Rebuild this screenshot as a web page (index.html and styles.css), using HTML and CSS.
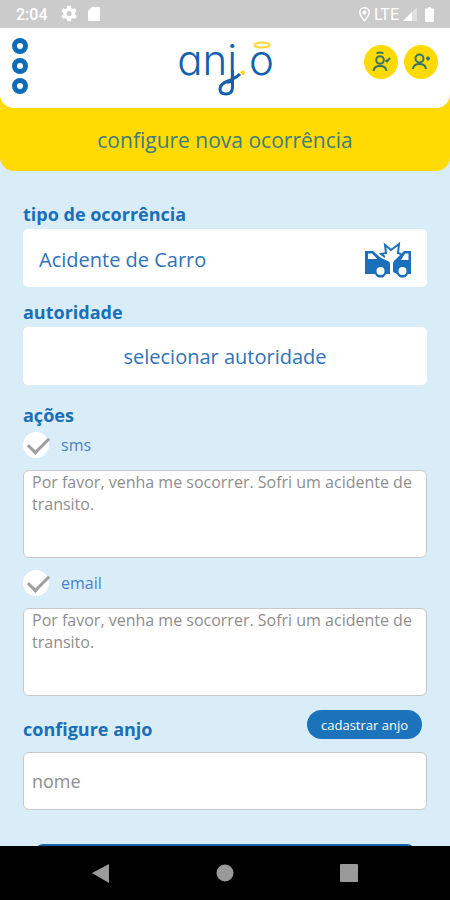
FILE: index.html
```html
<!DOCTYPE html>
<html lang="pt-BR">
  <head>
    <meta charset="UTF-8" />
    <meta name="viewport" content="width=device-width, initial-scale=1.0" />
    <title>anjo - nova ocorrência</title>
    <link rel="stylesheet" href="styles.css">
  </head>
  <body>
    <div class="app">
      <div class="status-bar">
        <span class="clock">2:04</span>
        <svg class="gear" width="18" height="18" viewBox="2 2 21 21"><path fill-rule="evenodd" d="M19.4 13a7.500 7.500 0 0 0 0-2l2.200-1.700-2.100-3.600-2.600 1a7.700 7.700 0 0 0-1.700-1L14.800 3H10.600l-.5 2.700a7.700 7.700 0 0 0-1.700 1l-2.600-1-2.100 3.600L5.900 11a7.500 7.500 0 0 0 0 2l-2.200 1.700 2.100 3.600 2.600-1a7.700 7.700 0 0 0 1.700 1l.5 2.700h4.200l.4-2.700a7.700 7.700 0 0 0 1.700-1l2.600 1 2.100-3.600zM12.700 15a3 3 0 1 1 0-6 3 3 0 0 1 0 6z"/></svg>
        <svg width="12" height="14" viewBox="0 0 12 14"><path d="M4 0h7a1 1 0 0 1 1 1v12a1 1 0 0 1-1 1H1a1 1 0 0 1-1-1V4z"/></svg>
        <div class="signal">
          <svg width="11" height="15" viewBox="0 0 11 15"><path fill-rule="evenodd" d="M5.500 0A5.300 5.300 0 0 0 0 5.300C0 9 5.500 15 5.500 15S11 9 11 5.300A5.300 5.300 0 0 0 5.500 0zm0 1.500a4 4 0 0 1 4 4c0 2-2.400 5.300-4 7.300-1.600-2-4-5.300-4-7.300a4 4 0 0 1 4-4zM5.500 3.500a2 2 0 1 0 0 4 2 2 0 0 0 0-4z"/></svg>
          <span>LTE</span>
          <svg width="14" height="14" viewBox="0 0 14 14"><path opacity=".4" d="M14 0v14H0z"/><path d="M9 5v9H0z"/></svg>
          <svg class="battery" width="9" height="15" viewBox="0 0 9 15"><path d="M3 0h3v1.500h2a1 1 0 0 1 1 1V14a1 1 0 0 1-1 1H1a1 1 0 0 1-1-1V2.500a1 1 0 0 1 1-1h2z"/></svg>
        </div>
      </div>

      <div class="top">
        <header class="header">
          <button type="button" class="menu" aria-label="menu">
            <svg width="16" height="56" viewBox="0 0 16 56"><circle cx="8" cy="8" r="5.500"/><circle cx="8" cy="28" r="5.500"/><circle cx="8" cy="48" r="5.500"/></svg>
          </button>
          <div class="logo">
            anj<span class="dot">.</span>o
            <svg class="halo" width="18" height="8" viewBox="0 0 18 8"><ellipse cx="9" cy="4" rx="7.500" ry="2.500"/></svg>
            <svg class="swash" width="26" height="26" viewBox="0 0 26 26"><path d="M15.500 0V17Q15.500 24 9 24Q3 24 3 19Q3 14 11 11Q19 8 23 4"/></svg>
          </div>
          <div class="actions">
            <button type="button" class="round" aria-label="anjos">
              <svg width="20" height="22" viewBox="0 0 20 22"><path d="M5.500 2.500Q9 .5 12.500 2.500"/><circle cx="9" cy="9" r="3.800"/><path d="M2.500 20Q3 15 9 15T15.500 20M14.500 9l1.500 1.500 3-3.500"/></svg>
            </button>
            <button type="button" class="round" aria-label="usuário">
              <svg width="20" height="22" viewBox="0 0 20 22"><circle cx="8.500" cy="7.500" r="4"/><path d="M2 18Q2.500 13 8.500 13T15 18"/><path d="M15 7.500h4M17 5.500v4"/></svg>
            </button>
          </div>
        </header>
        <h1>configure nova ocorrência</h1>
      </div>

      <main>
        <form>
          <label class="title" for="tipo">tipo de ocorrência</label>
          <div class="select-box">
            <select id="tipo" name="tipo">
              <option>Acidente de Carro</option>
            </select>
            <svg width="46" height="40" viewBox="0 -5 46 40">
              <path class="solid" fill-rule="evenodd" d="M0 8h8l8 7 7 3q2 1 2 3v10h-4a6 6 0 0 1-11 0H0zM3 10.500V16h9.500L7 10.500zM15.500 24a4 4 0 1 0 0 8 4 4 0 0 0 0-8z"/>
              <path class="solid" fill-rule="evenodd" d="M46 8h-7l-8 8-2 2q-1 1-1 3v8l4 2a6 6 0 0 0 11 0h3zM43.500 10.500V17H36l4-6.500zM37.500 24a4 4 0 1 0 0 8 4 4 0 0 0 0-8z"/>
              <path class="line" d="M20 14l-4-3 5-1-1-8 6 5 8-6-1 9 3 1"/>
            </svg>
          </div>

          <label class="title second" for="autoridade">autoridade</label>
          <div class="select-box centered">
            <select id="autoridade" name="autoridade">
              <option>selecionar autoridade</option>
            </select>
          </div>

          <h2 class="title third">ações</h2>
          <div class="check">
            <input type="checkbox" id="sms" name="sms" checked />
            <label for="sms">sms</label>
          </div>
          <textarea name="msg_sms" aria-label="mensagem sms">Por favor, venha me socorrer. Sofri um acidente de transito.</textarea>

          <div class="check next">
            <input type="checkbox" id="email" name="email" checked />
            <label for="email">email</label>
          </div>
          <textarea name="msg_email" aria-label="mensagem email">Por favor, venha me socorrer. Sofri um acidente de transito.</textarea>

          <div class="row">
            <label class="title" for="nome">configure anjo</label>
            <button type="button" class="pill">cadastrar anjo</button>
          </div>
          <input type="text" id="nome" name="nome" placeholder="nome" />

          <button type="submit" class="save" aria-label="salvar"></button>
        </form>
      </main>

      <nav class="nav-bar">
        <button type="button" aria-label="voltar"><svg width="20" height="20" viewBox="0 0 20 20"><path d="M18 1v19L1 10z"/></svg></button>
        <button type="button" aria-label="início"><svg width="20" height="20" viewBox="0 0 20 20"><circle cx="10" cy="10" r="8.500"/></svg></button>
        <button type="button" aria-label="recentes"><svg width="20" height="20" viewBox="0 0 20 20"><rect x="1" y="1" width="18" height="18" rx="1"/></svg></button>
      </nav>
    </div>
  </body>
</html>
```
FILE: styles.css
```css
* {
  box-sizing: border-box;
}
body {
  font-family: "Open Sans", sans-serif;
  color: #1a6fb8;
  background-color: #d9edf8;
  margin: 0;
}
button,
input,
select,
textarea {
  font-family: inherit;
  margin: 0;
}
button {
  border: none;
  background: none;
  padding: 0;
  cursor: pointer;
}
svg {
  display: block;
}
.app {
  display: flex;
  flex-direction: column;
  height: 100vh;
}
.status-bar {
  display: flex;
  align-items: center;
  flex-shrink: 0;
  height: 28px;
  padding: 0 16px;
  background-color: #cbcbcb;
  color: #fff;
  font-family: Roboto, sans-serif;
  font-size: 16px;
}
.clock {
  font-weight: 500;
}
.status-bar svg {
  fill: #fff;
}
.gear {
  margin: 0 10px 0 12px;
}
.signal {
  display: flex;
  align-items: center;
  gap: 4px;
  margin-left: auto;
}
.battery {
  margin-left: 4px;
}
.top {
  flex-shrink: 0;
  background-color: #ffdb03;
  border-radius: 0 0 14px 14px;
}
.header {
  display: flex;
  justify-content: space-between;
  height: 80px;
  padding: 10px 12px;
  background-color: #fff;
  border-radius: 0 0 14px 14px;
}
.menu {
  width: 75px;
  height: 56px;
}
.menu circle {
  fill: none;
  stroke: #0f6cb6;
  stroke-width: 5;
}
.logo {
  position: relative;
  font-family: Inter, sans-serif;
  font-feature-settings: "cv11";
  font-size: 42px;
  font-weight: 300;
  line-height: 44px;
  color: #1560ad;
}
.dot {
  color: #ffd21f;
}
.halo {
  position: absolute;
  top: 3px;
  right: 3px;
  fill: none;
  stroke: #ffd83b;
  stroke-width: 2;
}
.swash {
  position: absolute;
  top: 32px;
  left: 40px;
  fill: none;
  stroke: #1560ad;
  stroke-width: 3;
}
.actions {
  display: flex;
  gap: 6px;
  padding-top: 7px;
}
.round {
  display: flex;
  align-items: center;
  justify-content: center;
  width: 34px;
  height: 34px;
  border-radius: 50%;
  background-color: #ffdb03;
}
.round svg {
  fill: none;
  stroke: #377568;
  stroke-width: 2;
}
h1 {
  margin: 0;
  padding: 17px 0 15px;
  font-size: 21px;
  font-weight: 400;
  line-height: 31px;
  text-align: center;
  color: #427c7c;
}
main {
  flex: 1;
  min-height: 0;
  overflow: hidden;
  padding: 28px 23px 0;
}
form {
  display: flex;
  flex-direction: column;
}
.title {
  margin: 0;
  font-size: 18px;
  font-weight: bold;
  line-height: 30px;
}
.second {
  margin-top: 10px;
}
.third {
  margin-top: 15px;
}
.select-box {
  display: flex;
  align-items: center;
  height: 58px;
  padding: 0 16px;
  background-color: #fff;
  border-radius: 5px;
}
select {
  flex: 1;
  height: 58px;
  padding: 2px 0 0;
  appearance: none;
  border: none;
  background: none;
  color: #2f73b9;
  font-size: 20px;
}
.centered select {
  padding: 0;
  text-align: center;
  text-align-last: center;
}
.solid {
  fill: #1a70ba;
}
.line {
  fill: none;
  stroke: #1a70ba;
  stroke-width: 2;
}
.check {
  display: flex;
  align-items: center;
  gap: 12px;
  margin: 2px 0 12px;
  height: 26px;
  font-size: 16px;
  color: #4b83c9;
}
.next {
  margin-top: 12px;
}
.check input {
  display: flex;
  justify-content: center;
  width: 26px;
  height: 26px;
  appearance: none;
  border-radius: 50%;
  background-color: #fff;
}
.check input:checked::before {
  content: "";
  width: 18px;
  height: 9px;
  margin: 5px 0 0 5px;
  border: solid #a0a0a0;
  border-width: 0 0 3px 3px;
  transform: rotate(-45deg);
}
textarea,
input[type="text"] {
  width: 100%;
  border: 1px solid #c8c8c8;
  border-radius: 6px;
  background-color: #fff;
  color: #8e8e8e;
}
textarea {
  height: 88px;
  padding: 0 4px 0 8px;
  font-size: 16px;
  line-height: 22px;
  resize: none;
}
.row {
  display: flex;
  align-items: flex-start;
  justify-content: space-between;
  margin: 14px 0 8px;
  padding-right: 5px;
}
.row .title {
  padding-top: 4px;
}
.pill {
  height: 29px;
  padding: 0 14px;
  border-radius: 15px;
  background-color: #1b73bc;
  color: #fff;
  font-size: 13px;
  font-weight: 500;
}
input[type="text"] {
  height: 58px;
  padding: 0 8px;
  font-size: 18px;
}
input::placeholder {
  color: #8e8e8e;
}
.save {
  height: 56px;
  margin: 34px 12px 0;
  border-radius: 8px;
  background-color: #1a65ac;
}
.nav-bar {
  display: flex;
  align-items: center;
  justify-content: center;
  gap: 104px;
  flex-shrink: 0;
  height: 54px;
  background-color: #000;
}
.nav-bar svg {
  fill: #9a9a9a;
}
```
